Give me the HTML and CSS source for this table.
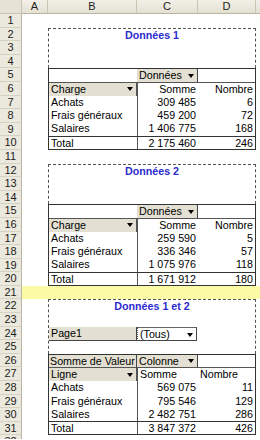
FILE: index.html
```html
<!DOCTYPE html>
<html lang="fr">
<head>
<meta charset="utf-8">
<link rel="stylesheet" href="styles.css">
</head>
<body>
<div class="sheet">
  <div class="corner"></div>
  <div class="ch">A</div>
  <div class="ch">B</div>
  <div class="ch">C</div>
  <div class="ch">D</div>
  <div class="ch last"></div>

  <div class="rh">1</div><div class="rh">2</div><div class="rh">3</div><div class="rh">4</div>
  <div class="rh">5</div><div class="rh">6</div><div class="rh">7</div><div class="rh">8</div>
  <div class="rh">9</div><div class="rh">10</div><div class="rh">11</div><div class="rh">12</div>
  <div class="rh">13</div><div class="rh">14</div><div class="rh">15</div><div class="rh">16</div>
  <div class="rh">17</div><div class="rh">18</div><div class="rh">19</div><div class="rh">20</div>
  <div class="rh">21</div><div class="rh">22</div><div class="rh">23</div><div class="rh">24</div>
  <div class="rh">25</div><div class="rh">26</div><div class="rh">27</div><div class="rh">28</div>
  <div class="rh">29</div><div class="rh">30</div><div class="rh">31</div><div class="rh last">32</div>

  <!-- Pivot 1 -->
  <div class="pivot p1">
    <div class="pagearea r3"><span class="title">Données 1</span></div>
    <div class="tbl r6">
      <div class="cell"></div>
      <div class="cell btn dd">Données</div>
      <div class="cell"></div>
      <div class="cell btn dd hdr">Charge</div>
      <div class="cell num vl">Somme</div>
      <div class="cell num">Nombre</div>
      <div class="cell">Achats</div><div class="cell num vl">309 485</div><div class="cell num">6</div>
      <div class="cell">Frais généraux</div><div class="cell num vl">459 200</div><div class="cell num">72</div>
      <div class="cell">Salaires</div><div class="cell num vl">1 406 775</div><div class="cell num">168</div>
      <div class="cell tot">Total</div><div class="cell num vl tot">2 175 460</div><div class="cell num tot">246</div>
    </div>
  </div>

  <!-- Pivot 2 -->
  <div class="pivot p2">
    <div class="pagearea r3"><span class="title">Données 2</span></div>
    <div class="tbl r6">
      <div class="cell"></div>
      <div class="cell btn dd">Données</div>
      <div class="cell"></div>
      <div class="cell btn dd hdr">Charge</div>
      <div class="cell num vl">Somme</div>
      <div class="cell num">Nombre</div>
      <div class="cell">Achats</div><div class="cell num vl">259 590</div><div class="cell num">5</div>
      <div class="cell">Frais généraux</div><div class="cell num vl">336 346</div><div class="cell num">57</div>
      <div class="cell">Salaires</div><div class="cell num vl">1 075 976</div><div class="cell num">118</div>
      <div class="cell tot">Total</div><div class="cell num vl tot">1 671 912</div><div class="cell num tot">180</div>
    </div>
  </div>

  <div class="band"></div>

  <!-- Pivot 3 -->
  <div class="pivot p3">
    <div class="pagearea r4">
      <span class="title">Données 1 et 2</span>
      <div class="pagefield">
        <div class="cell btn">Page1</div>
        <div class="cell sel dd">(Tous)</div>
      </div>
    </div>
    <div class="tbl r6">
      <div class="cell btn tight">Somme de Valeur</div>
      <div class="cell btn dd">Colonne</div>
      <div class="cell"></div>
      <div class="cell btn dd hdr">Ligne</div>
      <div class="cell vl">Somme</div>
      <div class="cell">Nombre</div>
      <div class="cell">Achats</div><div class="cell num vl">569 075</div><div class="cell num">11</div>
      <div class="cell">Frais généraux</div><div class="cell num vl">795 546</div><div class="cell num">129</div>
      <div class="cell">Salaires</div><div class="cell num vl">2 482 751</div><div class="cell num">286</div>
      <div class="cell tot">Total</div><div class="cell num vl tot">3 847 372</div><div class="cell num tot">426</div>
    </div>
  </div>
</div>
</body>
</html>
```

FILE: styles.css
```css
* { box-sizing: border-box; }
html, body { margin: 0; padding: 0; background: #fff; overflow: hidden; }
body {
  width: 260px;
  height: 440px;
  font-family: "Liberation Sans", Arial, sans-serif;
  font-size: 10.7px;
  color: #000;
}
.sheet {
  display: grid;
  grid-template-columns: 22px 26px 89px 61px 58px 4px;
  grid-template-rows: 14px repeat(31, 13.6px) 4px;
  background: #fff;
}
.corner {
  background: #e6e3d4;
  border-right: 1px solid #c9c5b3;
  border-bottom: 1px solid #c9c5b3;
}
.ch {
  background: linear-gradient(#f2f0e8, #e4e1d3);
  border-right: 1px solid #c9c5b3;
  border-bottom: 1px solid #b9b5a3;
  text-align: center;
  line-height: 13px;
  font-size: 11px;
  color: #222;
}
.ch.last { border-right: none; }
.rh {
  grid-column: 1;
  background: #ebe9dd;
  border-right: 1px solid #b9b5a3;
  border-bottom: 1px solid #d6d2c2;
  text-align: center;
  line-height: 13px;
  font-size: 11px;
  color: #222;
  overflow: hidden;
}
.rh.last { border-bottom: none; }
.band {
  grid-column: 2 / -1;
  grid-row: 22;
  background: #fbfba6;
}
.pivot {
  grid-column: 3 / 6;
  display: grid;
  grid-template-columns: 89px 61px 58px;
  grid-auto-rows: 13.6px;
}
.p1 { grid-row: 3 / 12; }
.p2 { grid-row: 13 / 22; }
.p3 { grid-row: 23 / 33; }
.pagearea {
  grid-column: 1 / -1;
  border: 1px dashed #555;
  border-bottom: none;
  display: flex;
  flex-direction: column;
  align-items: stretch;
}
.r3 { grid-row: span 3; }
.r4 { grid-row: span 4; }
.title {
  display: block;
  text-align: center;
  font-weight: bold;
  color: #2b2bd0;
  line-height: 13px;
}
.pagefield {
  margin-top: 13.6px;
  display: grid;
  grid-template-columns: 88px 60px;
  height: 13.6px;
}
.tbl {
  grid-column: 1 / -1;
  display: grid;
  grid-template-columns: 88px 61px 57px;
  grid-auto-rows: 1fr;
  border: 1px solid #333;
}
.r6 { grid-row: span 6; }
.cell {
  padding: 0 2px;
  line-height: 12.6px;
  white-space: nowrap;
  overflow: hidden;
  position: relative;
}
.tight { padding: 0 0 0 1px; }
.num { text-align: right; }
.vl { border-left: 1px solid #555; }
.tbl > .cell:nth-child(-n+3) { border-bottom: 1px solid #555; }
.tot { border-top: 1px solid #333; }
.btn {
  background: #e3e0d3;
  border-right: 1px solid #444;
  border-bottom: 1px solid #444;
}
.dd { padding-right: 11px; }
.dd::after {
  content: "";
  position: absolute;
  right: 3px;
  top: 4.5px;
  border-left: 3.5px solid transparent;
  border-right: 3.5px solid transparent;
  border-top: 4px solid #000;
}
.hdr { border-bottom: none; border-right: 1px solid #555; }
.sel {
  background: #fff;
  border-left: 1px dotted #555;
  border-top: 1px solid #666;
  border-right: 1px solid #444;
  border-bottom: 1px solid #444;
}
```
